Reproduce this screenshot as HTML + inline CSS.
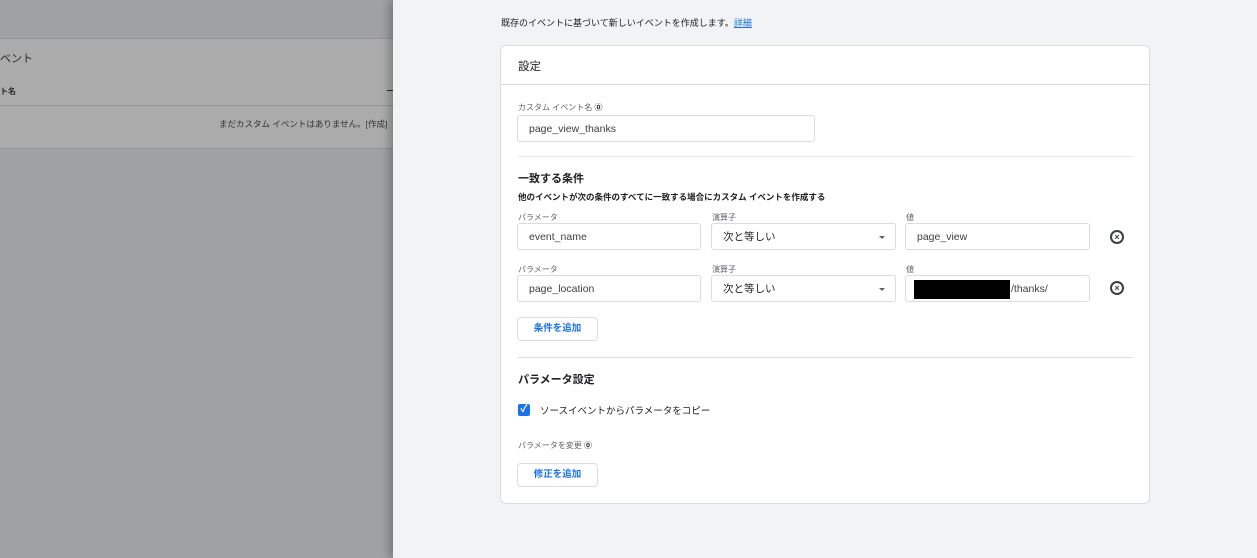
<!DOCTYPE html>
<html><head><meta charset="utf-8"><style>
*{box-sizing:border-box;margin:0;padding:0}
body{width:1257px;height:558px;overflow:hidden;position:relative;font-family:"Liberation Sans","Noto Sans CJK JP",sans-serif;color:#202124;background:#f1f3f4}
.abs{position:absolute}
.left{left:0;top:0;width:393px;height:558px;background:#a0a1a3}
.panel{left:393px;top:0;width:864px;height:558px;background:#f1f3f4;box-shadow:-4px 0 8px rgba(0,0,0,.25)}
.card{left:500px;top:45px;width:650px;height:459px;background:#fff;border:1px solid #dadce0;border-radius:6px}
.inp{position:absolute;height:27px;border:1px solid #dadce0;border-radius:3px;font-size:10.5px;color:#3c4043;padding-left:11px;line-height:27px;background:#fff}
.lbl{position:absolute;font-size:8px;color:#5f6368}
.btn{position:absolute;width:81px;height:24px;border:1px solid #dadce0;border-radius:4px;color:#1a73e8;font-size:9.5px;text-align:center;line-height:22px;font-weight:bold;background:#fff}
.arr{position:absolute;right:10px;top:12px;width:0;height:0;border-left:3.5px solid transparent;border-right:3.5px solid transparent;border-top:3.5px solid #5f6368}
.x{position:absolute;width:14px;height:14px;border:2px solid #3c4043;border-radius:50%;font-size:9px;line-height:10px;text-align:center;font-weight:bold;color:#3c4043}
</style></head><body>
<div class="abs left">
 <div class="abs" style="left:0;top:38px;width:393px;height:111px;background:#ababab;border-top:1px solid #939496;border-bottom:1px solid #939496"></div>
 <div class="abs" style="left:0;top:105px;width:393px;height:1px;background:#939496"></div>
 <div class="abs" style="left:0;top:50px;font-size:11px;color:#2a2a2a">ベント</div>
 <div class="abs" style="left:0;top:86px;font-size:8px;color:#2a2a2a;font-weight:bold">ト名</div>
 <div class="abs" style="left:387px;top:90px;width:6px;height:1px;background:#2a2a2a"></div>
 <div class="abs" style="left:219px;top:118px;font-size:8.5px;color:#333;white-space:nowrap">まだカスタム イベントはありません。[作成]</div>
</div>
<div class="abs panel"></div>
<div class="abs" style="left:501px;top:16px;font-size:9px;color:#202124">既存のイベントに基づいて新しいイベントを作成します。<span style="color:#1a73e8;text-decoration:underline">詳細</span></div>
<div class="abs card">
 <div class="abs" style="left:17px;top:12px;font-size:11.5px">設定</div>
 <div class="abs" style="left:0;top:38px;width:648px;height:1px;background:#dadce0"></div>
 <div class="lbl" style="left:17px;top:56px">カスタム イベント名 <b style="color:#202124">⓪</b></div>
 <div class="inp" style="left:16px;top:69px;width:298px">page_view_thanks</div>
 <div class="abs" style="left:17px;top:110px;width:615px;height:1px;background:#e8eaed"></div>
 <div class="abs" style="left:17px;top:124px;font-size:11px;font-weight:bold">一致する条件</div>
 <div class="abs" style="left:17px;top:145px;font-size:8.5px;font-weight:bold">他のイベントが次の条件のすべてに一致する場合にカスタム イベントを作成する</div>
 <div class="lbl" style="left:17px;top:166px">パラメータ</div>
 <div class="lbl" style="left:211px;top:166px">演算子</div>
 <div class="lbl" style="left:405px;top:166px">値</div>
 <div class="inp" style="left:16px;top:177px;width:184px">event_name</div>
 <div class="inp" style="left:210px;top:177px;width:185px;color:#202124">次と等しい<span class="arr"></span></div>
 <div class="inp" style="left:404px;top:177px;width:185px">page_view</div>
 <div class="x" style="left:609px;top:184px">×</div>
 <div class="lbl" style="left:17px;top:218px">パラメータ</div>
 <div class="lbl" style="left:211px;top:218px">演算子</div>
 <div class="lbl" style="left:405px;top:218px">値</div>
 <div class="inp" style="left:16px;top:229px;width:184px">page_location</div>
 <div class="inp" style="left:210px;top:229px;width:185px;color:#202124">次と等しい<span class="arr"></span></div>
 <div class="inp" style="left:404px;top:229px;width:185px;padding-left:105px">/thanks/<div class="abs" style="left:8px;top:4px;width:96px;height:19px;background:#000"></div></div>
 <div class="x" style="left:609px;top:235px">×</div>
 <div class="btn" style="left:16px;top:271px">条件を追加</div>
 <div class="abs" style="left:17px;top:311px;width:615px;height:1px;background:#dadce0"></div>
 <div class="abs" style="left:17px;top:325px;font-size:11px;font-weight:bold">パラメータ設定</div>
 <div class="abs" style="left:17px;top:358px;width:12px;height:12px;background:#1a73e8;border-radius:2px;color:#fff;font-size:10px;line-height:12px;text-align:center;font-weight:bold">✓</div>
 <div class="abs" style="left:39px;top:357px;font-size:9.5px">ソースイベントからパラメータをコピー</div>
 <div class="lbl" style="left:17px;top:394px">パラメータを変更 <b style="color:#202124">⓪</b></div>
 <div class="btn" style="left:16px;top:417px">修正を追加</div>
</div>
</body></html>
